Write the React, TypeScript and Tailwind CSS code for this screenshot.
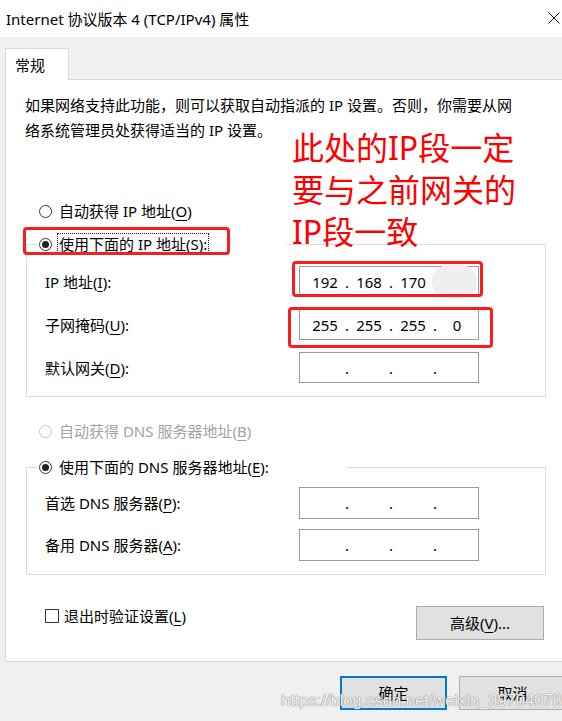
import React from 'react'

const FONT = "font-['Noto_Sans','Noto_Sans_CJK_SC',sans-serif]"

const Radio = ({ checked = false, disabled = false }: { checked?: boolean; disabled?: boolean }) => (
    <span
        className={`w-[13px] h-[13px] shrink-0 rounded-full border bg-white flex items-center justify-center ${
            disabled ? 'border-[#c4c4c4]' : 'border-[#333333]'
        }`}
    >
        {checked && <span className="w-[7px] h-[7px] rounded-full bg-[#222222]" />}
    </span>
)

const Key = ({ k }: { k: string }) => <u className="underline-offset-[3px] decoration-1">{k}</u>

const IpField = ({ parts }: { parts: string[] }) => (
    <div className="w-[180px] h-full shrink-0 border border-[#9a9a9a] bg-white flex items-center pl-[7px] leading-[18px]">
        {parts.map((p, i) => (
            <React.Fragment key={i}>
                <span className="w-[36px] text-center">{p}</span>
                {i < 3 && <span className="w-[8px] text-center">.</span>}
            </React.Fragment>
        ))}
    </div>
)

const FieldRow = ({ label, parts, h }: { label: React.ReactNode; parts: string[]; h: string }) => (
    <div className={`flex items-center ${h}`}>
        <span className="w-[254px] shrink-0 leading-[18px]">{label}</span>
        <IpField parts={parts} />
    </div>
)

const empty = ['', '', '', '']

export default function App() {
    return (
        <div className={`relative w-[562px] h-[721px] overflow-hidden bg-[#f0f0f0] text-[15px] text-black ${FONT}`}>
            {/* title bar */}
            <div className="h-[37px] bg-white flex items-center justify-between pl-[6px] pr-[2px]">
                <span className="leading-[20px]">Internet 协议版本 4 (TCP/IPv4) 属性</span>
                <svg width="12" height="12" viewBox="0 0 12 12" className="mb-[1px]">
                    <path d="M0.5 0.5 L11.5 11.5 M11.5 0.5 L0.5 11.5" stroke="#111" strokeWidth="1" fill="none" />
                </svg>
            </div>

            {/* tabs + panel */}
            <div className="pt-[11px] pl-[5px]">
                <div className="relative z-10 -mb-px w-[64px] h-[32px] bg-white border border-b-0 border-[#d9d9d9] pl-[9px] flex items-center leading-[18px]">
                    常规
                </div>
                <div className="w-[600px] bg-white border border-[#d9d9d9] pb-[21px]">
                    <p className="mt-[13px] pl-[19px] leading-[25px] whitespace-nowrap">
                        如果网络支持此功能，则可以获取自动指派的 IP 设置。否则，你需要从网
                        <br />
                        络系统管理员处获得适当的 IP 设置。
                    </p>

                    {/* ip mode */}
                    <div className="mt-[56px] h-[24px] pl-[33px] flex items-center gap-[7px] leading-[18px]">
                        <Radio />
                        <span>
                            自动获得 IP 地址(<Key k="O" />)
                        </span>
                    </div>

                    <fieldset className="mt-[9px] ml-[20px] w-[520px] border border-[#dcdcdc] pb-[13px]">
                        <legend className="ml-[11px] w-[249px] p-0">
                            <div className="h-[24px] flex items-center pl-[1px] gap-[5px] leading-[18px]">
                                <Radio checked />
                                <span className="border border-dotted border-[#222] px-[1px] leading-[20px]">
                                    使用下面的 IP 地址(<Key k="S" />):
                                </span>
                            </div>
                        </legend>
                        <div className="pt-[10px] pl-[18px] flex flex-col gap-[12px]">
                            <FieldRow h="h-[31px]" label={<>IP 地址(<Key k="I" />):</>} parts={['192', '168', '170', '']} />
                            <FieldRow h="h-[31px]" label={<>子网掩码(<Key k="U" />):</>} parts={['255', '255', '255', '0']} />
                            <FieldRow h="h-[31px]" label={<>默认网关(<Key k="D" />):</>} parts={empty} />
                        </div>
                    </fieldset>

                    {/* dns mode */}
                    <div className="mt-[22px] h-[24px] pl-[33px] flex items-center gap-[7px] leading-[18px] text-[#a3a3a3]">
                        <Radio disabled />
                        <span>
                            自动获得 DNS 服务器地址(<Key k="B" />)
                        </span>
                    </div>

                    <fieldset className="mt-[12px] ml-[20px] w-[520px] border border-[#dcdcdc] pb-[13px]">
                        <legend className="ml-[11px] w-[309px] p-0">
                            <div className="h-[24px] flex items-center pl-[1px] gap-[7px] leading-[18px]">
                                <Radio checked />
                                <span>
                                    使用下面的 DNS 服务器地址(<Key k="E" />):
                                </span>
                            </div>
                        </legend>
                        <div className="pt-[8px] pl-[18px] flex flex-col gap-[10px]">
                            <FieldRow h="h-[32px]" label={<>首选 DNS 服务器(<Key k="P" />):</>} parts={empty} />
                            <FieldRow h="h-[32px]" label={<>备用 DNS 服务器(<Key k="A" />):</>} parts={empty} />
                        </div>
                    </fieldset>

                    {/* validate + advanced */}
                    <div className="mt-[31px] ml-[20px] w-[520px] flex items-start">
                        <div className="mt-[3px] pl-[19px] h-[14px] flex items-center gap-[5px]">
                            <span className="w-[14px] h-[14px] border border-[#333333] bg-white" />
                            <span className="leading-[18px]">
                                退出时验证设置(<Key k="L" />)
                            </span>
                        </div>
                        <button className="ml-auto mr-[2px] w-[128px] h-[34px] bg-[#e1e1e1] border border-[#adadad] leading-[18px]">
                            高级(<Key k="V" />)...
                        </button>
                    </div>
                </div>
            </div>

            {/* dialog buttons */}
            <div className="flex gap-[12px] pl-[340px] pt-[14px]">
                <button className="w-[107px] h-[34px] shrink-0 bg-[#e1e1e1] border-2 border-[#0078d7] leading-[18px]">确定</button>
                <button className="w-[107px] h-[34px] shrink-0 bg-[#e1e1e1] border border-[#adadad] leading-[18px]">取消</button>
            </div>

            {/* annotations over the screenshot */}
            <div className="absolute left-[292px] top-[127px] text-[32px] leading-[42px] text-[#ff0000]">
                此处的IP段一定
                <br />
                要与之前网关的
                <br />
                IP段一致
            </div>
            <div className="absolute left-[23px] top-[227px] w-[207px] h-[28px] border-[3px] border-[#fb1d1d] rounded-[4px]" />
            <div className="absolute left-[432px] top-[265px] w-[45px] h-[33px] rounded-[16px] bg-[#efefef]" />
            <div className="absolute left-[292px] top-[261px] w-[191px] h-[36px] border-[3px] border-[#fb1d1d] rounded-[4px]" />
            <div className="absolute left-[288px] top-[307px] w-[205px] h-[41px] border-[3px] border-[#fb1d1d] rounded-[4px]" />

            {/* watermark */}
            <div className="absolute left-[281px] top-[690px] text-[16.5px] leading-[20px] text-[#f4f4f4] font-['Liberation_Sans',sans-serif] [text-shadow:0_0_1px_#7a7a7a,0_0_1px_#7a7a7a]">
                https://blog.csdn.net/weixin_39704078
            </div>
        </div>
    )
}
